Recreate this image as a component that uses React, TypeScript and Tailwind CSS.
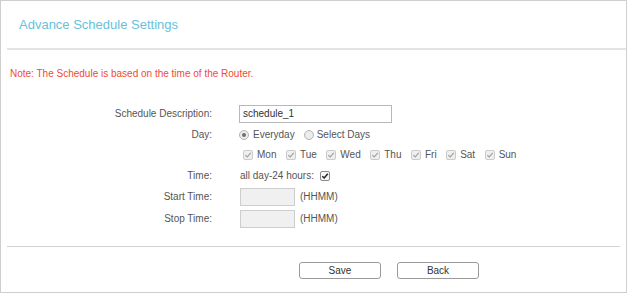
import React from "react";

type BoxProps = { checked?: boolean; disabled?: boolean };

const CheckBox: React.FC<BoxProps> = ({ checked, disabled }) => (
  <span
    className={`flex h-[10px] w-[10px] shrink-0 items-center justify-center rounded-[2px] border ${
      disabled ? "border-[#cbcbcb] bg-[#efefef]" : "border-[#8a8a8a] bg-[#f6f6f6]"
    }`}
  >
    {checked && (
      <svg width="8" height="8" viewBox="0 0 8 8">
        <path
          d="M1.3 4.2 L3.2 6 L6.8 1.8"
          fill="none"
          stroke={disabled ? "#a3a3a3" : "#222"}
          strokeWidth={disabled ? 1.2 : 1.5}
        />
      </svg>
    )}
  </span>
);

const Radio: React.FC<{ selected?: boolean }> = ({ selected }) => (
  <span className="flex h-[10px] w-[10px] shrink-0 items-center justify-center rounded-full border border-[#b4b4b4] bg-[#ececec]">
    {selected && <span className="h-[4px] w-[4px] rounded-full bg-[#6f6f6f]" />}
  </span>
);

const days = ["Mon", "Tue", "Wed", "Thu", "Fri", "Sat", "Sun"];

const Row: React.FC<{ label?: string; h: string; children: React.ReactNode }> = ({
  label,
  h,
  children,
}) => (
  <div className={`flex items-center ${h}`}>
    <div className="w-[211px] text-right">{label}</div>
    <div className="ml-[27px] flex items-center">{children}</div>
  </div>
);

export default function App() {
  return (
    <div
      className="h-[293px] w-[627px] border border-[#cfcfcf] bg-white text-[10px] leading-[12px] text-[#555]"
      style={{ fontFamily: '"Liberation Sans", Arial, sans-serif' }}
    >
      <div className="flex h-[47px] items-center pl-[18px] text-[13px] text-[#66c2d8]">
        Advance Schedule Settings
      </div>
      <div className="ml-[6px] h-[2px] bg-[#e4e4e4]" />

      <div className="mt-[18px] pl-[9px] text-[#f04a35]">
        Note: The Schedule is based on the time of the Router.
      </div>

      <div className="mt-[24px] flex flex-col">
        <Row label="Schedule Description:" h="h-[20px]">
          <div className="flex h-[18px] w-[153px] items-center border border-[#b8b8b8] bg-white pl-[3px] text-[#333]">
            schedule_1
          </div>
        </Row>

        <Row label="Day:" h="h-[21px]">
          <Radio selected />
          <span className="ml-[4px]">Everyday</span>
          <span className="ml-[9px]">
            <Radio />
          </span>
          <span className="ml-[3px]">Select Days</span>
        </Row>

        <Row h="h-[20px]">
          <div className="ml-[4px] flex items-center gap-[9.5px]">
            {days.map((d) => (
              <div key={d} className="flex items-center gap-[4px]">
                <CheckBox checked disabled />
                <span>{d}</span>
              </div>
            ))}
          </div>
        </Row>

        <Row label="Time:" h="h-[21px]">
          <span className="ml-[1px]">all day-24 hours:</span>
          <span className="ml-[6px]">
            <CheckBox checked />
          </span>
        </Row>

        <Row label="Start Time:" h="h-[22px]">
          <div className="ml-[1px] h-[18px] w-[55px] border border-[#cdcdcd] bg-[#f0f0f0]" />
          <span className="ml-[5px]">(HHMM)</span>
        </Row>

        <Row label="Stop Time:" h="h-[22px]">
          <div className="ml-[1px] h-[18px] w-[55px] border border-[#cdcdcd] bg-[#f0f0f0]" />
          <span className="ml-[5px]">(HHMM)</span>
        </Row>
      </div>

      <div className="mx-[6px] mt-[16px] h-px bg-[#d2d2d2]" />

      <div className="mt-[15px] flex gap-[16px] pl-[298px]">
        <button className="flex h-[17px] w-[82px] items-center justify-center rounded-[3px] border border-[#9a9a9a] bg-white text-[10px] text-[#333]">
          Save
        </button>
        <button className="flex h-[17px] w-[82px] items-center justify-center rounded-[3px] border border-[#9a9a9a] bg-white text-[10px] text-[#333]">
          Back
        </button>
      </div>
    </div>
  );
}
